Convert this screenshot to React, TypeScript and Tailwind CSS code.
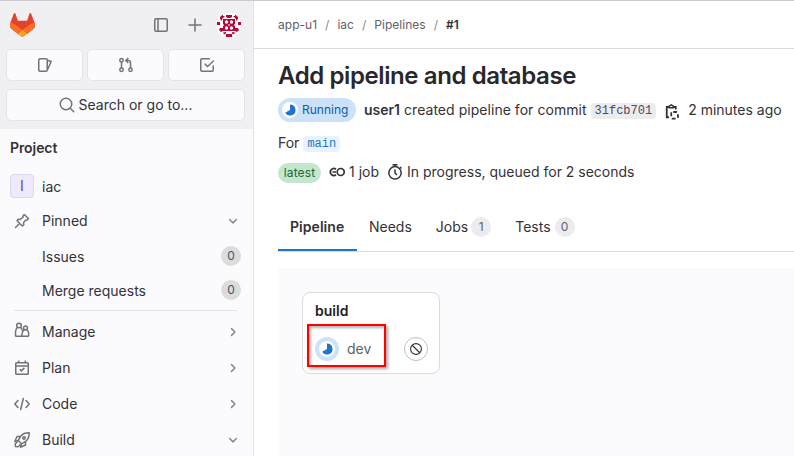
import type { ReactNode } from 'react';

function Icon({ children, className = '', size = 16 }: { children: ReactNode; className?: string; size?: number }) {
  return (
    <svg
      viewBox="0 0 16 16"
      width={size}
      height={size}
      fill="none"
      stroke="currentColor"
      strokeWidth="1.5"
      className={`shrink-0 ${className}`}
    >
      {children}
    </svg>
  );
}

function Tanuki() {
  return (
    <svg viewBox="0 0 25 24" width="25" height="24" className="shrink-0">
      <path fill="#E24329" d="m24.507 9.5-.034-.09L21.082.562a.896.896 0 0 0-1.694.091l-2.29 7.01H7.825L5.535.653a.898.898 0 0 0-1.694-.09L.451 9.411.416 9.5a6.297 6.297 0 0 0 2.09 7.278l.012.01.03.022 5.16 3.867 2.56 1.935 1.554 1.176a1.051 1.051 0 0 0 1.268 0l1.555-1.176 2.56-1.935 5.197-3.89.014-.01A6.297 6.297 0 0 0 24.507 9.5Z" />
      <path fill="#FC6D26" d="m24.507 9.5-.034-.09a11.44 11.44 0 0 0-4.56 2.051l-7.447 5.632 4.742 3.584 5.197-3.89.014-.01A6.297 6.297 0 0 0 24.507 9.5Z" />
      <path fill="#FCA326" d="m7.707 20.677 2.56 1.935 1.555 1.176a1.051 1.051 0 0 0 1.268 0l1.555-1.176 2.56-1.935-4.743-3.584-4.755 3.584Z" />
      <path fill="#FC6D26" d="M5.01 11.461a11.43 11.43 0 0 0-4.56-2.05L.416 9.5a6.297 6.297 0 0 0 2.09 7.278l.012.01.03.022 5.16 3.867 4.745-3.584-7.444-5.632Z" />
    </svg>
  );
}

function Avatar() {
  return (
    <svg viewBox="0 0 24 24" width="24" height="24" className="shrink-0">
      <circle cx="12" cy="12" r="12" fill="#fff" />
      <g fill="#b5073a">
        <rect x="6" y="6" width="12" height="12" />
        <path d="M3 6V4l3-2.500v1.500h2L5 6v2zM21 6V4l-3-2.500v1.500h-2l3 3v2zM9 2h6v2l-1.500 1h-3L9 4zM0 9h3v3H0zM21 9h3v3h-3zM3 15h3v3l-2 1-2-2zM21 15h-3v3l2 1 2-2zM9 21h6v3H9zM6 19.500l3-.500v1.500l-2 1zM18 19.500l-3-.500v1.500l2 1z" />
      </g>
      <g fill="#fff">
        <circle cx="9.500" cy="9" r="1.700" />
        <circle cx="14.500" cy="9" r="1.700" />
        <circle cx="9.500" cy="15" r="1.700" />
        <circle cx="14.500" cy="15" r="1.700" />
        <path d="M6 11l1.200 1L6 13zM18 11l-1.200 1 1.200 1zM11 12l1-1 1 1-1 1z" />
      </g>
    </svg>
  );
}

const Chevron = ({ open }: { open?: boolean }) => (
  <Icon size={12} className="text-[#89888d]">
    <path d={open ? 'M3.500 6l4.500 4.500L12.500 6' : 'M6 3.500l4.500 4.500L6 12.500'} strokeWidth="2" strokeLinecap="round" strokeLinejoin="round" />
  </Icon>
);

const Count = ({ n, className }: { n: number; className: string }) => (
  <span className={`flex h-5 w-5 shrink-0 items-center justify-center rounded-full text-xs ${className}`}>{n}</span>
);

function NavRow({ icon, label, open }: { icon: ReactNode; label: string; open?: boolean }) {
  return (
    <div className="flex h-9 items-center pr-3.5 pl-3.5">
      {icon}
      <span className="ml-3 flex-1">{label}</span>
      <Chevron open={open} />
    </div>
  );
}

function PinnedItem({ label }: { label: string }) {
  return (
    <div className="flex h-[34px] items-center pr-3 pl-[42px]">
      <span className="flex-1">{label}</span>
      <Count n={0} className="mb-0.5 bg-[#dcdcde] text-[#535158]" />
    </div>
  );
}

const TopButton = ({ children }: { children: ReactNode }) => (
  <div className="flex h-8 flex-1 items-center justify-center rounded-[5px] border border-[#e4e4e8] bg-[#fbfafd]">{children}</div>
);

function Sidebar() {
  return (
    <aside className="w-[254px] shrink-0 border-r border-[#e3e3e7] bg-[#fbfafd]">
      <div className="h-32 bg-[#f0f0f3] px-1.5 text-[#737278]">
        <div className="flex h-12 items-center pr-[6px] pl-[4px]">
          <Tanuki />
          <Icon className="ml-auto">
            <rect x="1.750" y="1.750" width="12.500" height="12.500" rx="1.200" />
            <path d="M5 2v12" />
          </Icon>
          <Icon className="mr-3.5 ml-[18px]">
            <path d="M8 2v12M2 8h12" strokeLinecap="round" />
          </Icon>
          <Avatar />
        </div>
        <div className="flex gap-1 pr-[2px]">
          <TopButton>
            <Icon>
              <rect x="1.750" y="1.750" width="8.500" height="12.500" rx="1.200" />
              <path d="M10.500 3.200l3.700 1.300-3.700 8.300" strokeLinejoin="round" />
            </Icon>
          </TopButton>
          <TopButton>
            <Icon>
              <circle cx="3.500" cy="3.200" r="1.700" />
              <circle cx="3.500" cy="12.800" r="1.700" />
              <circle cx="12.500" cy="12.800" r="1.700" />
              <path d="M3.500 5v6M12.500 11V5.500q0-2-2-2H8M10.300 1L7.800 3.500l2.500 2.500" />
            </Icon>
          </TopButton>
          <TopButton>
            <Icon>
              <path d="M10.500 1.750H2.950q-1.200 0-1.200 1.200v10.100q0 1.200 1.200 1.200h10.100q1.200 0 1.200-1.200V9" strokeLinecap="round" />
              <path d="M6 7l2.500 2.500 6-5.500" strokeLinecap="round" />
            </Icon>
          </TopButton>
        </div>
        <div className="mt-2 mr-[2px] flex h-8 items-center justify-center rounded-[5px] border border-[#e4e4e8] bg-[#fbfafd]">
          <Icon>
            <circle cx="7" cy="7" r="5.750" />
            <path d="M11.200 11.200l3.500 3.500" strokeLinecap="round" />
          </Icon>
          <span className="ml-1 text-[#333238]">Search or go to...</span>
        </div>
      </div>
      <div className="pt-[7px] text-[#333238]">
        <div className="flex h-6 items-center pl-2.5 font-semibold tracking-[-0.08px]">Project</div>
        <div className="mt-2 flex h-9 items-center pl-2.5">
          <span className="flex h-6 w-6 items-center justify-center rounded border border-[#dcd5ec] bg-[#eee9fb] text-[#6347b0]">I</span>
          <span className="ml-2 pt-0.5">iac</span>
        </div>
        <div className="-mt-px">
          <NavRow
            open
            label="Pinned"
            icon={
              <Icon className="text-[#737278]">
                <path d="M1.500 14.500L5.800 10.200M10.300 1.500l4.200 4.200-1.700 1.500-1-.3-2.300 2.900.3 2-1.500 1.200L3 7.700l1.200-1.500 2 .3 2.900-2.300-.3-1z" strokeLinejoin="round" strokeLinecap="round" />
              </Icon>
            }
          />
        </div>
        <div className="pt-px">
          <PinnedItem label="Issues" />
          <PinnedItem label="Merge requests" />
        </div>
        <div className="mr-4 ml-3.5 mt-[2px] mb-[3px] h-px bg-[#e3e3e7]" />
        <div className="text-[#333238]">
          <NavRow
            label="Manage"
            icon={
              <Icon className="-mt-1 text-[#737278]">
                <circle cx="5" cy="3.500" r="2.300" />
                <circle cx="11.500" cy="6" r="1.900" />
                <path d="M3.200 5.500Q1.500 7.500 1.500 10v3.400q0 .8.800.8h5.400M6.800 5.500Q8 6.800 8.200 8.500M10.200 7.700Q8 9.500 8 12v1.400q0 .8.800.8h5.100q.8 0 .8-.8V12q0-2.800-1.900-4.300" />
              </Icon>
            }
          />
          <NavRow
            label="Plan"
            icon={
              <Icon className="text-[#737278]">
                <rect x="1.750" y="2.750" width="12.500" height="11.500" rx=".8" />
                <path d="M2 6h12M4.700.5v2.500M11.300.5v2.500M5.700 9.200l1.700 1.700 3-3" />
              </Icon>
            }
          />
          <NavRow
            label="Code"
            icon={
              <Icon className="text-[#737278]">
                <path d="M4 4.500L.8 8 4 11.500M12 4.500L15.200 8 12 11.500M9.300 2.500l-2.600 11" strokeLinecap="round" strokeLinejoin="round" />
              </Icon>
            }
          />
          <NavRow
            open
            label="Build"
            icon={
              <Icon className="text-[#737278]">
                <path d="M15.200.8Q9.500.8 6.800 4L4.200 8.500 7.500 11.800l4.500-2.600Q15.200 6.500 15.200.8zM6.500 4.500H3L.8 9.500l3.400-1M11.500 9.500V13l-5 2.200 1-3.400M3.500 9.500L1.200 12l.3 2.500 2.500.3 2.500-2.300" strokeLinejoin="round" />
                <circle cx="10" cy="6" r="1.200" />
              </Icon>
            }
          />
        </div>
      </div>
    </aside>
  );
}

/* Pie segment of the running status, three fifths full */
const RunningPie = ({ className }: { className?: string }) => (
  <svg viewBox="0 0 12 12" width="12" height="12" className={className}>
    <path d="M6 .5A5.500 5.500 0 1 1 1.200 8.700L6 6z" fill="#1f75cb" />
  </svg>
);

const Sep = () => <span className="text-[#89888d]">/</span>;

function Main() {
  return (
    <main className="min-w-0 flex-1 bg-white text-[#333238]">
      <div className="flex h-12 items-center gap-2 border-b border-[#dcdcde] pl-6 text-xs tracking-[0.02px] whitespace-nowrap text-[#626168]">
        <span>app-u1</span>
        <Sep />
        <span>iac</span>
        <Sep />
        <span>Pipelines</span>
        <Sep />
        <span className="font-semibold text-[#333238]">#1</span>
      </div>
      <div className="pl-6 whitespace-nowrap">
        <h1 className="mt-3 flex h-[29px] items-center text-2xl font-semibold tracking-[-0.4px] text-[#28272d]">Add pipeline and database</h1>
        <div className="mt-2 flex h-6 items-center">
          <span className="flex h-6 w-[78px] items-center rounded-full bg-[#cbe2f9] pl-1 text-xs text-[#0b5cad]">
            <span className="mr-1 flex h-4 w-4 items-center justify-center rounded-full bg-white">
              <RunningPie />
            </span>
            Running
          </span>
          <span className="ml-2 font-semibold">user1</span>
          <span className="ml-1 tracking-[0.04px]">created pipeline for commit</span>
          <code className="mt-0.5 ml-1 flex h-4 items-center rounded bg-[#ececef] px-1 font-['Liberation_Mono',monospace] text-xs text-[#4c4b51]">31fcb701</code>
          <Icon className="mt-[3px] ml-2">
            <path d="M5 3H2.750v10.250H5M9.500 3h2.250v2.500" strokeWidth="1.800" />
            <path d="M5.200 3.800V2.200L7.250.9l2.050 1.300v1.600z" />
            <rect x="7.250" y="8" width="6.700" height="6.700" rx="1.500" strokeWidth="1.800" strokeDasharray="3.700 2.300" strokeDashoffset="-.500" />
          </Icon>
          <span className="ml-2">2 minutes ago</span>
        </div>
        <div className="mt-[9px] flex h-6 items-center">
          For
          <code className="mt-0.5 ml-1 flex h-4 items-center rounded bg-[#e9f3fc] px-1 font-['Liberation_Mono',monospace] text-xs text-[#1f75cb]">main</code>
        </div>
        <div className="mt-[5px] flex h-6 items-center">
          <span className="mt-0.5 flex h-5 w-[43px] items-center justify-center rounded-full bg-[#c3e6cd] text-xs tracking-[0.1px] text-[#24663b]">latest</span>
          <Icon className="ml-2">
            <circle cx="11.700" cy="8" r="3.500" strokeWidth="1.700" />
            <path d="M7 5.200A3.500 3.500 0 1 0 7 10.800M3.500 8H7" strokeWidth="1.700" />
          </Icon>
          <span className="ml-1">1 job</span>
          <Icon className="ml-2">
            <circle cx="8" cy="8.800" r="6.200" />
            <path d="M5.500.8h5M8 1v2M13 3l1.500 1.500M8 5.500V9l2 2" />
          </Icon>
          <span className="ml-1">In progress, queued for 2 seconds</span>
        </div>
        <div className="mt-[19px] flex h-[49px] border-b border-[#dcdcde]">
          <span className="flex w-[79px] items-center border-b-2 border-[#1f75cb] px-3 pt-0.5 font-semibold tracking-[0.05px]">Pipeline</span>
          <span className="flex items-center px-3">Needs</span>
          <span className="flex items-center px-3">
            Jobs
            <Count n={1} className="ml-[3px] bg-[#ececef] text-[#626168]" />
          </span>
          <span className="flex items-center px-3">
            Tests
            <Count n={0} className="ml-1 bg-[#ececef] text-[#626168]" />
          </span>
        </div>
        <div className="mt-4 h-[200px] bg-[#fbfafd] p-6">
          <div className="relative h-[82px] w-[138px] rounded-lg border border-[#dcdcde] bg-white px-3 pt-2">
            <div className="flex h-5 items-center font-semibold text-[#1f1e24]">build</div>
            <div className="mt-4 flex h-6 items-center">
              <span className="flex h-6 w-6 items-center justify-center rounded-full border-4 border-[#cbe2f9] bg-white">
                <RunningPie />
              </span>
              <span className="ml-2 text-[#626168]">dev</span>
              <span className="mr-[-1px] ml-auto flex h-6 w-6 items-center justify-center rounded-full border border-[#bfbfc3]">
                <Icon size={14}>
                  <circle cx="8" cy="8" r="6.200" strokeWidth="1.300" />
                  <path d="M3.700 3.700l8.600 8.600" strokeWidth="1.300" />
                </Icon>
              </span>
            </div>
            <div className="absolute top-[31px] left-[4px] h-[43px] w-[79px] border-2 border-[#ff0000] shadow-[2px_2px_3px_rgba(0,0,0,0.35),inset_2px_2px_3px_rgba(0,0,0,0.3)]" />
          </div>
        </div>
      </div>
    </main>
  );
}

export default function App() {
  return (
    <div className="flex h-[456px] w-[794px] overflow-hidden border-t border-[#cbcbcd] font-['Inter',sans-serif] text-sm">
      <Sidebar />
      <Main />
    </div>
  );
}
